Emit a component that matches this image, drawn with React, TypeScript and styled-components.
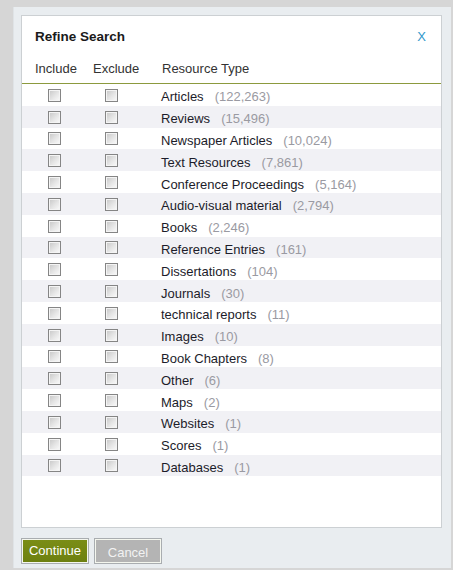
import React from "react";
import styled, { createGlobalStyle } from "styled-components";

const GlobalStyle = createGlobalStyle`
  html, body {
    margin: 0;
    padding: 0;
    background: #d6d6d6;
    font-family: "Liberation Sans", Arial, sans-serif;
  }
`;

const resourceTypes = [
  { name: "Articles", count: "122,263" },
  { name: "Reviews", count: "15,496" },
  { name: "Newspaper Articles", count: "10,024" },
  { name: "Text Resources", count: "7,861" },
  { name: "Conference Proceedings", count: "5,164" },
  { name: "Audio-visual material", count: "2,794" },
  { name: "Books", count: "2,246" },
  { name: "Reference Entries", count: "161" },
  { name: "Dissertations", count: "104" },
  { name: "Journals", count: "30" },
  { name: "technical reports", count: "11" },
  { name: "Images", count: "10" },
  { name: "Book Chapters", count: "8" },
  { name: "Other", count: "6" },
  { name: "Maps", count: "2" },
  { name: "Websites", count: "1" },
  { name: "Scores", count: "1" },
  { name: "Databases", count: "1" },
];

const App = () => {
  return (
    <>
      <GlobalStyle />
      <Overlay>
        <Dialog>
          <Panel>
            <TitleBar>
              <Title>Refine Search</Title>
              <Close>X</Close>
            </TitleBar>
            <HeaderRow>
              <HeaderCell $pad={13}>Include</HeaderCell>
              <HeaderCell $pad={0}>Exclude</HeaderCell>
              <HeaderCell $pad={1}>Resource Type</HeaderCell>
            </HeaderRow>
            {resourceTypes.map((item, i) => (
              <Row key={item.name} $shaded={i % 2 === 1}>
                <BoxCell $pad={26}>
                  <Check type="checkbox" />
                </BoxCell>
                <BoxCell $pad={12}>
                  <Check type="checkbox" />
                </BoxCell>
                <NameCell>
                  {item.name}
                  <Count>({item.count})</Count>
                </NameCell>
              </Row>
            ))}
          </Panel>
          <Footer>
            <ContinueButton>Continue</ContinueButton>
            <CancelButton>Cancel</CancelButton>
          </Footer>
        </Dialog>
      </Overlay>
    </>
  );
};

export default App;

const Overlay = styled.div`
  height: 570px;
  padding: 7px 2px 0 13px;
  box-sizing: border-box;
  overflow: hidden;
`;

const Dialog = styled.div`
  width: 438px;
  height: 561px;
  background: #e9edf0;
  border-left: 1px solid #dfe3e6;
  box-sizing: border-box;
  padding: 8px 9px 0 7px;
  display: flex;
  flex-direction: column;
`;

const Panel = styled.div`
  height: 513px;
  background: #fff;
  border: 1px solid #ccd0d3;
  box-sizing: border-box;
`;

const TitleBar = styled.div`
  height: 40px;
  display: flex;
  align-items: center;
  justify-content: space-between;
  padding: 0 15px 0 13px;
`;

const Title = styled.div`
  font-size: 13.5px;
  font-weight: 700;
  color: #1a1a1a;
`;

const Close = styled.div`
  font-size: 13px;
  color: #3399cc;
  cursor: pointer;
`;

const HeaderRow = styled.div`
  height: 24px;
  padding-bottom: 3px;
  display: grid;
  grid-template-columns: 71px 68px 1fr;
  align-items: center;
  border-bottom: 1px solid #8c9a3e;
`;

const HeaderCell = styled.div<{ $pad: number }>`
  padding-left: ${(p) => p.$pad}px;
  font-size: 13px;
  color: #333;
`;

const Row = styled.div<{ $shaded: boolean }>`
  height: 21.8px;
  display: grid;
  grid-template-columns: 71px 68px 1fr;
  align-items: center;
  background: ${(p) => (p.$shaded ? "#f1f1f5" : "#fff")};
`;

const BoxCell = styled.div<{ $pad: number }>`
  padding-left: ${(p) => p.$pad}px;
  display: flex;
  align-items: center;
  padding-top: 1px;
`;

const Check = styled.input`
  appearance: none;
  margin: 0;
  width: 13px;
  height: 13px;
  border: 1px solid #858585;
  box-shadow: inset 0 0 0 1px #f4f4f4;
  background: linear-gradient(135deg, #c6c6c6 0%, #e6e6e6 55%, #fbfbfb 100%);
  box-sizing: border-box;
`;

const NameCell = styled.div`
  padding-top: 4px;
  font-size: 13px;
  color: #1c1c2a;
  white-space: nowrap;
`;

const Count = styled.span`
  margin-left: 11px;
  color: #9a9aa2;
`;

const Footer = styled.div`
  display: flex;
  gap: 7px;
  padding: 11px 0 0 1px;
`;

const BaseButton = styled.button`
  width: 66px;
  height: 24px;
  margin: 0;
  padding: 0;
  font-family: "Liberation Sans", Arial, sans-serif;
  font-size: 13px;
  box-sizing: border-box;
  border: 1px solid #f4f6ee;
  outline: 1px solid #a9adb0;
  cursor: pointer;
`;

const ContinueButton = styled(BaseButton)`
  background: linear-gradient(#7a8d16, #6d8010);
  color: #fff;
  padding-bottom: 1px;
`;

const CancelButton = styled(BaseButton)`
  background: #b4b4b4;
  color: #f2f2f2;
  padding-top: 2px;
`;
